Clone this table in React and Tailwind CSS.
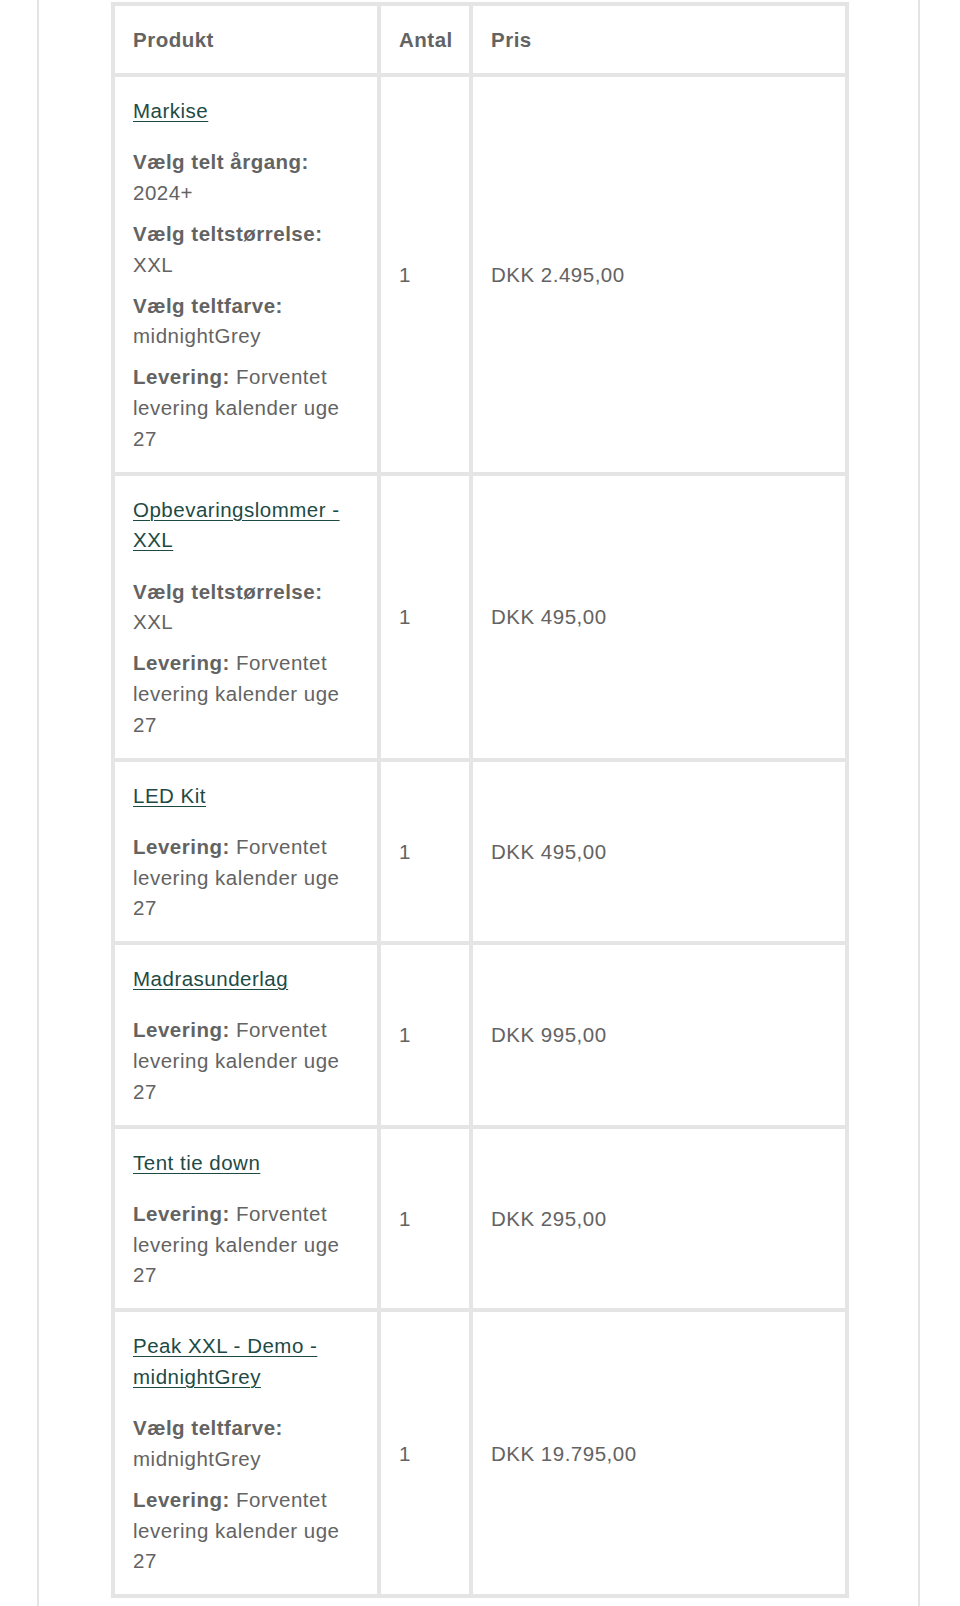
import React from 'react';

const items = [
  {
    name: 'Markise',
    options: [
      { label: 'Vælg telt årgang:', value: '2024+' },
      { label: 'Vælg teltstørrelse:', value: 'XXL' },
      { label: 'Vælg teltfarve:', value: 'midnightGrey' },
    ],
    qty: 1,
    price: 'DKK 2.495,00',
  },
  {
    name: 'Opbevaringslommer - XXL',
    options: [{ label: 'Vælg teltstørrelse:', value: 'XXL' }],
    qty: 1,
    price: 'DKK 495,00',
  },
  { name: 'LED Kit', options: [], qty: 1, price: 'DKK 495,00' },
  { name: 'Madrasunderlag', options: [], qty: 1, price: 'DKK 995,00' },
  { name: 'Tent tie down', options: [], qty: 1, price: 'DKK 295,00' },
  {
    name: 'Peak XXL - Demo - midnightGrey',
    options: [{ label: 'Vælg teltfarve:', value: 'midnightGrey' }],
    qty: 1,
    price: 'DKK 19.795,00',
  },
];

const cell = 'border-r-4 border-b-4 border-[#e5e5e5] px-[18px] pt-[19px] pb-[17px] text-left';

export default function App() {
  return (
    <div className="min-h-screen bg-white font-['Liberation_Sans',Arial,sans-serif] text-[20.5px] leading-[30.75px] tracking-[0.5px] text-[#636363]">
      <div className="ml-[37px] w-[883px] min-h-screen border-x-2 border-[#e3e3e3] pt-[2px] pl-[72px]">
        <table className="table-fixed border-separate border-spacing-0 border-l-4 border-t-4 border-[#e5e5e5] w-[738px]">
          <thead>
            <tr>
              <th className={`${cell} w-[266px] font-bold`}>Produkt</th>
              <th className={`${cell} w-[92px] font-bold`}>Antal</th>
              <th className={`${cell} w-[376px] font-bold`}>Pris</th>
            </tr>
          </thead>
          <tbody>
            {items.map(item => (
              <tr key={item.name}>
                <td className={`${cell} align-top`}>
                  <a href="#" className="text-[#1d4a45] underline underline-offset-[3px] decoration-1">
                    {item.name}
                  </a>
                  <ul className="mt-[20.5px] flex flex-col gap-[10.25px]">
                    {item.options.map(o => (
                      <li key={o.label}>
                        <strong className="font-bold">{o.label}</strong>
                        <p>{o.value}</p>
                      </li>
                    ))}
                    <li>
                      <strong className="font-bold">Levering:</strong> Forventet levering kalender uge 27
                    </li>
                  </ul>
                </td>
                <td className={`${cell} align-middle`}>{item.qty}</td>
                <td className={`${cell} align-middle`}>{item.price}</td>
              </tr>
            ))}
          </tbody>
        </table>
      </div>
    </div>
  );
}
